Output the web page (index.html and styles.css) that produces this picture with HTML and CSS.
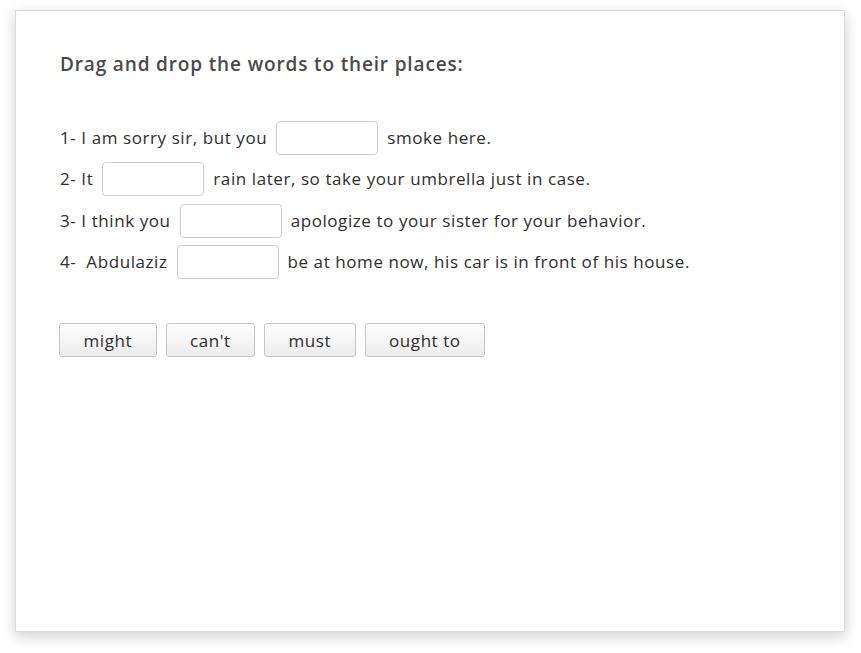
FILE: index.html
```html
<!DOCTYPE html>
<html>
<head>
<meta charset="utf-8">
<link rel="stylesheet" href="styles.css">
</head>
<body>
<div class="card">
  <h1 class="title">Drag and drop the words to their places:</h1>
  <div class="rows">
    <div class="row"><span>1- I am sorry sir, but you</span><span class="slot"></span><span>smoke here.</span></div>
    <div class="row"><span>2- It</span><span class="slot"></span><span>rain later, so take your umbrella just in case.</span></div>
    <div class="row"><span>3- I think you</span><span class="slot"></span><span>apologize to your sister for your behavior.</span></div>
    <div class="row"><span>4-&nbsp; Abdulaziz</span><span class="slot"></span><span>be at home now, his car is in front of his house.</span></div>
  </div>
  <div class="words">
    <button class="word">might</button>
    <button class="word">can't</button>
    <button class="word">must</button>
    <button class="word">ought to</button>
  </div>
</div>
</body>
</html>
```

FILE: styles.css
```css
html, body {
  margin: 0;
  padding: 0;
  background: #fff;
}
body {
  box-sizing: border-box;
  min-height: 653px;
  padding: 10px 0 21px 15px;
  font-family: "Open Sans", "Liberation Sans", sans-serif;
  color: #333;
}
.card {
  box-sizing: border-box;
  width: 830px;
  height: 622px;
  border: 1px solid #dcdcdc;
  background: #fff;
  box-shadow: 0 4px 14px rgba(0, 0, 0, 0.2);
  padding: 41px 0 0 44px;
}
.title {
  margin: 0;
  font-size: 19px;
  letter-spacing: 0.85px;
  line-height: 24px;
  font-weight: 600;
  color: #4a4a4a;
}
.rows {
  margin-top: 45px;
  display: flex;
  flex-direction: column;
  gap: 7.4px;
}
.row {
  display: flex;
  align-items: center;
  gap: 9px;
  height: 34px;
  font-size: 17px;
  letter-spacing: 0.58px;
  line-height: 22px;
  color: #2e2e2e;
}
.slot {
  box-sizing: border-box;
  width: 102px;
  height: 34px;
  border: 1px solid #cfcfcf;
  border-radius: 4px;
  background: #fff;
}
.words {
  margin-top: 44px;
  margin-left: -1px;
  display: flex;
  gap: 9px;
}
.word {
  box-sizing: border-box;
  height: 34px;
  padding: 0 23.5px;
  border: 1px solid #c6c6c6;
  border-radius: 3px;
  background: linear-gradient(#ffffff, #ececec);
  font-family: "Open Sans", "Liberation Sans", sans-serif;
  font-size: 17px;
  letter-spacing: 0.55px;
  color: #2e2e2e;
  cursor: pointer;
}
```
